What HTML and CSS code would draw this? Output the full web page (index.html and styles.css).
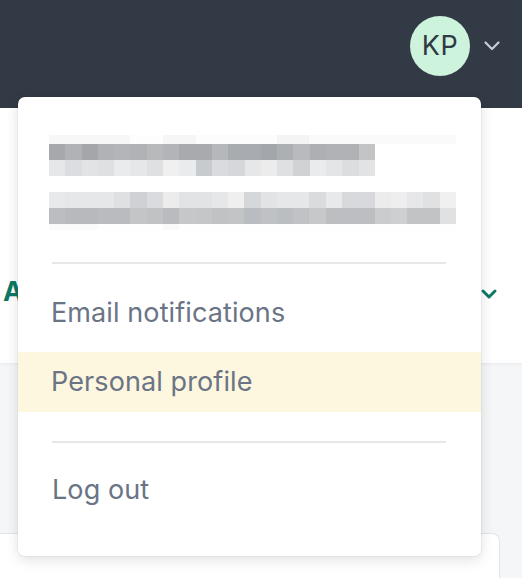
FILE: index.html
```html
<!DOCTYPE html>
<html lang="en">
<head>
    <meta charset="UTF-8">
    <meta name="viewport" content="width=device-width, initial-scale=1.0">
    <title>Account menu</title>
    <link rel="stylesheet" href="styles.css">
</head>
<body>
    <!-- top bar -->
    <header class="topbar">
        <div class="user">
            <div class="avatar">KP</div>
            <svg class="caret" width="18" height="12" viewBox="0 0 18 12">
                <path d="M2.5 2.5l6.5 6.5 6.5-6.5" fill="none" stroke="#c9cdd3" stroke-width="2.2" stroke-linecap="round" stroke-linejoin="round"/>
            </svg>
        </div>
    </header>

    <!-- sub navigation (mostly hidden under the menu) -->
    <div class="subnav">
        <span class="tab">All</span>
        <svg class="check" width="18" height="14" viewBox="0 0 18 14">
            <path d="M3 4l6 6 6-6" fill="none" stroke="#0d7864" stroke-width="3" stroke-linecap="round" stroke-linejoin="round"/>
        </svg>
    </div>

    <main class="content">
        <div class="card"></div>
    </main>

    <!-- account dropdown -->
    <div class="dropdown">
        <div class="account">
            <div class="px-row name-top"></div>
            <div class="px-row name-dark"></div>
            <div class="px-row name-light"></div>
            <div class="px-row mail-light"></div>
            <div class="px-row mail-dark"></div>
            <div class="px-row mail-bottom"></div>
        </div>

        <hr class="divider">

        <a class="menu-item" href="#">Email notifications</a>
        <a class="menu-item active" href="#">Personal profile</a>

        <hr class="divider second">

        <a class="menu-item logout" href="#">Log out</a>
    </div>
</body>
</html>
```

FILE: styles.css
```css
body {
    margin: 0;
    font-family: Inter, "Noto Sans", sans-serif;
    background: #f5f6f7;
    height: 578px;
    overflow: hidden;
}

.topbar {
    height: 108px;
    background: #323a45;
    display: flex;
    justify-content: flex-end;
    align-items: center;
    padding-right: 21px;
}

.user {
    display: flex;
    align-items: center;
    gap: 13px;
    margin-top: -16px;
}

.avatar {
    width: 60px;
    height: 60px;
    border-radius: 50%;
    background: #cdf3dc;
    color: #303945;
    font-size: 27px;
    line-height: 60px;
    text-align: center;
    letter-spacing: 0.5px;
}

.caret {
    display: block;
}

.subnav {
    height: 255px;
    background: #fff;
    display: flex;
    justify-content: space-between;
    align-items: flex-start;
    padding: 168px 24px 0 3px;
    box-sizing: border-box;
    box-shadow: 0 1px 3px rgba(0,0,0,0.06);
}

.tab {
    color: #0d7864;
    font-weight: 700;
    font-size: 27px;
    line-height: 32px;
}

.check {
    margin-top: 11px;
}

.content {
    padding-top: 170px;
}

.card {
    width: 499px;
    height: 60px;
    background: #fff;
    border: 1px solid #e3e5e8;
    border-left: none;
    border-radius: 0 8px 0 0;
}

.dropdown {
    position: absolute;
    left: 18px;
    top: 97px;
    width: 463px;
    height: 459px;
    box-sizing: border-box;
    background: #fff;
    border-radius: 7px;
    box-shadow: 0 4px 14px rgba(0,0,0,0.12), 0 0 0 1px rgba(0,0,0,0.04);
    padding-top: 38px;
}

/* blurred account name / email */
.account {
    padding-left: 31px;
}

.px-row {
    height: 16px;
}

.name-top {
    height: 9px;
    width: 407px;
    background: linear-gradient(to right, #f7f7f7 0 20%, #fdfdfd 20% 28%, #f6f6f6 28% 36%, #fcfcfc 36% 56%, #f4f4f4 56% 64%, #fafafa 64% 100%);
}

.name-dark {
    width: 326px;
    background: linear-gradient(to right,
        #a6a8ac 0 5%, #b0b2b5 5% 10%, #a4a6aa 10% 15%, #b0b2b6 15% 20%,
        #b3b5b8 20% 25%, #b0b2b5 25% 30%, #b7b9bb 30% 35%, #b2b4b8 35% 40%,
        #a8aaae 40% 45%, #a8aaae 45% 50%, #b5b7ba 50% 55%, #a8abaf 55% 60%,
        #a8abaf 60% 65%, #a3a6aa 65% 70%, #adb0b3 70% 75%, #b8babd 75% 80%,
        #adb0b3 80% 85%, #b0b2b5 85% 90%, #b0b2b5 90% 95%, #c2c4c6 95% 100%);
}

.name-light {
    width: 326px;
    background: linear-gradient(to right,
        #e6e7e8 0 5%, #dcdde0 5% 10%, #e2e3e5 10% 15%, #dfe0e2 15% 20%,
        #eaebec 20% 25%, #e6e7e8 25% 30%, #dfe0e2 30% 35%, #f0f0f1 35% 40%,
        #eaebec 40% 45%, #c8cbcd 45% 50%, #dadbde 50% 55%, #d5d7da 55% 60%,
        #e6e7e8 60% 65%, #ececed 65% 70%, #dfe0e2 70% 75%, #d0d2d5 75% 80%,
        #eaebec 80% 85%, #e4e5e7 85% 90%, #dcdde0 90% 95%, #e2e3e5 95% 100%);
}

.mail-light {
    width: 407px;
    margin-top: 16px;
    background: linear-gradient(to right,
        #e8e9ea 0 4%, #e6e7e8 4% 8%, #e6e7e8 8% 12%, #e6e7e8 12% 16%,
        #dfe0e2 16% 20%, #cfd1d4 20% 24%, #dadbde 24% 28%, #ececed 28% 32%,
        #e2e3e5 32% 36%, #e2e3e5 36% 40%, #e6e7e8 40% 44%, #efeff0 44% 48%,
        #d5d8da 48% 52%, #e2e3e5 52% 56%, #e6e7e8 56% 60%, #e6e7e8 60% 64%,
        #dadbde 64% 68%, #e8e9ea 68% 72%, #d7d9dc 72% 76%, #d7d9dc 76% 80%,
        #ececed 80% 84%, #eeeeef 84% 88%, #e6e7e8 88% 92%, #e0e1e3 92% 96%,
        #f0f0f1 96% 100%);
}

.mail-dark {
    width: 407px;
    background: linear-gradient(to right,
        #bbbdc0 0 4%, #b7b9bd 4% 8%, #b7b9bd 8% 12%, #b9bbbe 12% 16%,
        #b9bbbe 16% 20%, #c4c5c7 20% 24%, #c0c2c4 24% 28%, #b9bbbe 28% 32%,
        #c6c7c9 32% 36%, #c4c6c8 36% 40%, #c0c2c4 40% 44%, #c2c4c6 44% 48%,
        #b9bcc0 48% 52%, #bfc1c4 52% 56%, #bbbec1 56% 60%, #c0c2c5 60% 64%,
        #c6c8ca 64% 68%, #bcbec1 68% 72%, #bcbec1 72% 76%, #bcbec1 76% 80%,
        #cbcccd 80% 84%, #cdcfd1 84% 88%, #c1c3c5 88% 92%, #c1c3c5 92% 96%,
        #e0e1e2 96% 100%);
}

.mail-bottom {
    height: 6px;
    width: 407px;
    background: linear-gradient(to right, #fafafa 0 12%, #fefefe 12% 28%, #f9f9f9 28% 32%, #fefefe 32% 100%);
}

.divider {
    border: none;
    height: 2px;
    background: #e6e7e8;
    margin: 32px 35px 0 34px;
}

.divider.second {
    margin-top: 29px;
}

.menu-item {
    display: block;
    height: 60px;
    line-height: 60px;
    padding-left: 33px;
    font-size: 27px;
    letter-spacing: 0.1px;
    color: #6a7485;
    text-decoration: none;
}

.divider + .menu-item {
    margin-top: 19px;
}

.menu-item + .menu-item {
    margin-top: 9px;
}

.menu-item.active {
    background: #fef7df;
}

.divider + .menu-item.logout {
    margin-top: 17px;
    padding-left: 34px;
}
```
